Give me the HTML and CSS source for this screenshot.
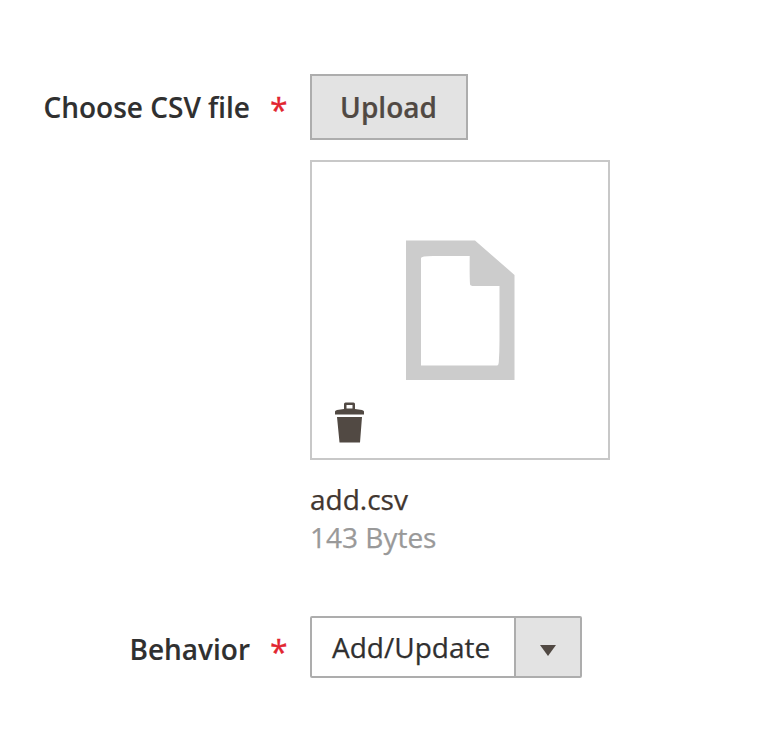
FILE: index.html
```html
<!DOCTYPE html>
<html lang="en">
<head>
<meta charset="utf-8">
<title>Import</title>
<link rel="stylesheet" href="styles.css">
</head>
<body>
<form class="form">
  <div class="field field-file">
    <div class="label"><span>Choose CSV file</span><span class="required">*</span></div>
    <div class="control">
      <button type="button" class="upload">Upload</button>
      <div class="preview">
        <svg class="file-icon" width="110" height="140" viewBox="0 0 110 140"><path fill="#ccc" fill-rule="evenodd" d="M1 .5H70L109.500 35V140H1ZM16 18V125.500H92Q93.500 125.500 93.800 122Q94.500 112 94.500 100V46H69Q65 46 65 44Q64.500 36 64.700 16H28Q16 16 16 18Z"/></svg>
        <svg class="trash-icon" width="30" height="41" viewBox="0 0 30 41"><path fill="#514943" fill-rule="evenodd" d="M9 7V2Q9 .5 10.500 .5H18.500Q20 .5 20 2V7L27 8Q29 8.500 29 9.500V12.500H0V9.500Q0 8.500 2 8ZM11.500 3V6.500H17.500V3ZM2 15H27L25 40.500H4.500Z"/></svg>
      </div>
      <div class="file-name">add.csv</div>
      <div class="file-size">143 Bytes</div>
    </div>
  </div>
  <div class="field field-behavior">
    <div class="label"><span>Behavior</span><span class="required">*</span></div>
    <div class="select"><span class="value">Add/Update</span><span class="toggle"><svg width="16" height="11" viewBox="0 0 16 11"><path fill="#514943" d="M0 0H16L8 11Z"/></svg></span></div>
  </div>
</form>
</body>
</html>
```
FILE: styles.css
```css
* { box-sizing: border-box; }
body { margin: 0; background: #fff; color: #303030; font: 28px/38px "Open Sans", sans-serif; -webkit-text-stroke: .25px currentColor; }
.form { padding-top: 74px; }
.field { display: flex; align-items: flex-start; }
.label { width: 310px; padding-right: 23px; display: flex; justify-content: flex-end; font-weight: 600; white-space: nowrap; -webkit-text-stroke: .1px currentColor; }
.field-file .label { padding-top: 14px; }
.required { width: 17px; margin-left: 20px; color: #e22630; font-size: 32px; font-weight: 500; line-height: 44px; -webkit-text-stroke: .3px currentColor; }
.upload { display: block; width: 158px; height: 66px; padding: 0 1px 0 0; border: 2px solid #adadad; background: #e3e3e3; color: #514943; font: 600 28px/38px "Open Sans", sans-serif; -webkit-text-stroke: .2px currentColor; }
.preview { display: flex; flex-direction: column; justify-content: space-between; width: 300px; height: 300px; margin-top: 20px; padding: 78px 23px 15px; border: 2px solid #c8c8c8; }
.file-icon { margin-left: 70px; }
.trash-icon { display: block; }
.file-name { margin-top: 20px; color: #41362f; }
.file-size { color: #999; }
.field-behavior { margin-top: 60px; }
.field-behavior .label { padding-top: 14px; }
.select { display: flex; width: 272px; height: 62px; border: 2px solid #adadad; border-radius: 2px; }
.value { width: 202px; padding: 10px 0 0 20px; }
.toggle { flex: 1; display: flex; align-items: center; justify-content: center; padding-top: 6px; border-left: 2px solid #adadad; background: #e3e3e3; }
```
